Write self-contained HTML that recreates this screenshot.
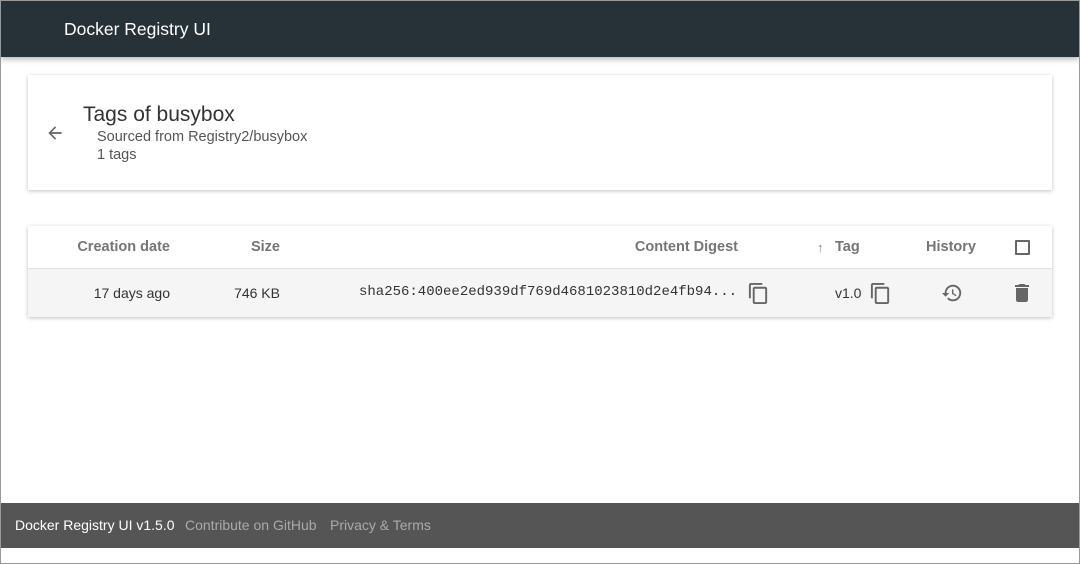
<!DOCTYPE html>
<html><head><meta charset="utf-8"><style>
*{margin:0;padding:0;box-sizing:border-box}
body{width:1080px;height:564px;position:relative;background:#fff;font-family:"Liberation Sans",Roboto,sans-serif;overflow:hidden}
.a{position:absolute;white-space:nowrap}
.hdr{left:0;top:0;width:1080px;height:57px;background:#263238;box-shadow:0 2px 6px rgba(0,0,0,.3)}
.card{background:#fff;box-shadow:0 1px 4px rgba(0,0,0,.25)}
.th{font-size:14.5px;font-weight:bold;color:#757575;top:239px}
.td{font-size:14px;color:#333;top:285px}
.ft{left:0;top:503px;width:1080px;height:45px;background:#555}
</style></head><body>
<div class="a hdr"></div>
<div class="a" style="left:64px;top:19px;font-size:17.5px;color:#fff;font-weight:500">Docker Registry UI</div>

<div class="a card" style="left:28px;top:75px;width:1024px;height:115px"></div>
<svg class="a" style="left:45px;top:123px" width="20" height="20" viewBox="0 0 24 24"><path d="M20 11H7.83l5.59-5.59L12 4l-8 8 8 8 1.41-1.41L7.83 13H20v-2z" fill="#666"/></svg>
<div class="a" style="left:83px;top:103px;font-size:21px;color:#333">Tags of busybox</div>
<div class="a" style="left:97px;top:129px;font-size:14.5px;color:#555">Sourced from Registry2/busybox</div>
<div class="a" style="left:97px;top:147px;font-size:14.5px;color:#555">1 tags</div>

<div class="a card" style="left:28px;top:226px;width:1024px;height:91px"></div>
<div class="a" style="left:28px;top:268px;width:1024px;height:1px;background:#e0e0e0"></div>
<div class="a" style="left:28px;top:269px;width:1024px;height:48px;background:#f5f5f5"></div>
<div class="a th" style="right:910px">Creation date</div>
<div class="a th" style="right:800px">Size</div>
<div class="a th" style="right:342px">Content Digest</div>
<div class="a" style="left:817px;top:240px;font-size:13px;color:#888">↑</div>
<div class="a th" style="left:835px">Tag</div>
<div class="a th" style="left:926px">History</div>
<div class="a" style="left:1015px;top:240px;width:15px;height:15px;border:2px solid #666;border-radius:1px"></div>

<div class="a td" style="right:910px">17 days ago</div>
<div class="a td" style="right:800px">746 KB</div>
<div class="a td" style="left:359px;font-family:'Liberation Mono',monospace;font-size:14px;top:284px">sha256:400ee2ed939df769d4681023810d2e4fb94...</div>
<svg class="a" style="left:747px;top:282px" width="23" height="23" viewBox="0 0 24 24"><path d="M16 1H4c-1.1 0-2 .9-2 2v14h2V3h12V1zm3 4H8c-1.1 0-2 .9-2 2v14c0 1.1.9 2 2 2h11c1.1 0 2-.9 2-2V7c0-1.1-.9-2-2-2zm0 16H8V7h11v14z" fill="#666"/></svg>
<div class="a td" style="left:835px">v1.0</div>
<svg class="a" style="left:869px;top:282px" width="23" height="23" viewBox="0 0 24 24"><path d="M16 1H4c-1.1 0-2 .9-2 2v14h2V3h12V1zm3 4H8c-1.1 0-2 .9-2 2v14c0 1.1.9 2 2 2h11c1.1 0 2-.9 2-2V7c0-1.1-.9-2-2-2zm0 16H8V7h11v14z" fill="#666"/></svg>
<svg class="a" style="left:941px;top:282px" width="22" height="22" viewBox="0 0 24 24"><path d="M13 3a9 9 0 0 0-9 9H1l3.89 3.89.07.14L9 12H6c0-3.87 3.13-7 7-7s7 3.13 7 7-3.13 7-7 7c-1.93 0-3.68-.79-4.94-2.06l-1.42 1.42A8.954 8.954 0 0 0 13 21a9 9 0 0 0 0-18zm-1 5v5l4.28 2.54.72-1.21-3.5-2.08V8H12z" fill="#666"/></svg>
<svg class="a" style="left:1010px;top:281px" width="24" height="24" viewBox="0 0 24 24"><path d="M6 19c0 1.1.9 2 2 2h8c1.1 0 2-.9 2-2V7H6v12zM19 4h-3.5l-1-1h-5l-1 1H5v2h14V4z" fill="#666"/></svg>

<div class="a ft"></div>
<div class="a" style="left:15px;top:517px;font-size:14px;color:#fff">Docker Registry UI v1.5.0</div>
<div class="a" style="left:185px;top:517px;font-size:14px;color:#aaa">Contribute on GitHub</div>
<div class="a" style="left:330px;top:517px;font-size:14px;color:#aaa">Privacy &amp; Terms</div>
<div class="a" style="left:0;top:0;width:1080px;height:564px;border:1px solid #999"></div>
</body></html>
